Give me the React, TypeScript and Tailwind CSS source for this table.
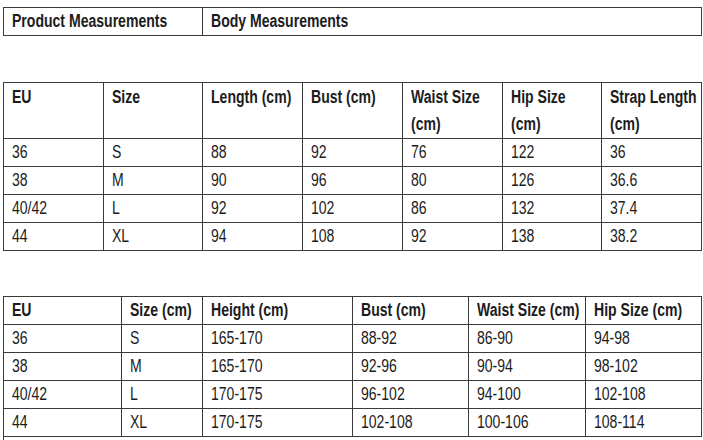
import React from "react";

const font = { fontFamily: '"Liberation Sans", Arial, sans-serif' };

const productHead = [["EU"], ["Size"], ["Length (cm)"], ["Bust (cm)"], ["Waist Size", "(cm)"], ["Hip Size", "(cm)"], ["Strap Length", "(cm)"]];
const productRows = [
  ["36", "S", "88", "92", "76", "122", "36"],
  ["38", "M", "90", "96", "80", "126", "36.6"],
  ["40/42", "L", "92", "102", "86", "132", "37.4"],
  ["44", "XL", "94", "108", "92", "138", "38.2"],
];

const bodyHead = ["EU", "Size (cm)", "Height (cm)", "Bust (cm)", "Waist Size (cm)", "Hip Size (cm)"];
const bodyRows = [
  ["36", "S", "165-170", "88-92", "86-90", "94-98"],
  ["38", "M", "165-170", "92-96", "90-94", "98-102"],
  ["40/42", "L", "170-175", "96-102", "94-100", "102-108"],
  ["44", "XL", "170-175", "102-108", "100-106", "108-114"],
];

const cell = "border border-[#3a3a3a] px-2 py-0 align-top text-left leading-[27px] whitespace-nowrap";

// narrow face, like the condensed type of the original
const N = ({ children }: { children: React.ReactNode }) => (
  <span className="inline-block origin-left scale-x-[0.78]">{children}</span>
);

export default function App() {
  return (
    <div className="w-[703px] h-[440px] overflow-hidden bg-white text-[#1c1c1c] text-[18px] pt-[7px] pl-[3px]" style={font}>
      {/* tabs */}
      <table className="w-[699px] table-fixed border-collapse">
        <colgroup>
          <col className="w-[199px]" />
          <col />
        </colgroup>
        <tbody>
          <tr>
            <td className={`${cell} font-bold`}><N>Product Measurements</N></td>
            <td className={`${cell} font-bold`}><N>Body Measurements</N></td>
          </tr>
        </tbody>
      </table>

      {/* product */}
      <table className="w-[699px] table-fixed border-collapse mt-[46px]">
        <colgroup>
          <col className="w-[100px]" />
          <col className="w-[99px]" />
          <col className="w-[100px]" />
          <col className="w-[100px]" />
          <col className="w-[100px]" />
          <col className="w-[99px]" />
          <col />
        </colgroup>
        <thead>
          <tr>
            {productHead.map((h) => (
              <th key={h[0]} className={`${cell} font-bold pt-[1px] h-[55px]`}>
                {h.map((l) => (
                  <div key={l}><N>{l}</N></div>
                ))}
              </th>
            ))}
          </tr>
        </thead>
        <tbody>
          {productRows.map((r) => (
            <tr key={r[0]}>
              {r.map((v, i) => (
                <td key={i} className={cell}>
                  <N>{v}</N>
                </td>
              ))}
            </tr>
          ))}
        </tbody>
      </table>

      {/* body */}
      <table className="w-[699px] table-fixed border-collapse mt-[45px]">
        <colgroup>
          <col className="w-[118px]" />
          <col className="w-[81px]" />
          <col className="w-[150px]" />
          <col className="w-[116px]" />
          <col className="w-[117px]" />
          <col />
        </colgroup>
        <thead>
          <tr>
            {bodyHead.map((h) => (
              <th key={h} className={`${cell} font-bold`}>
                <N>{h}</N>
              </th>
            ))}
          </tr>
        </thead>
        <tbody>
          {bodyRows.map((r) => (
            <tr key={r[0]}>
              {r.map((v, i) => (
                <td key={i} className={cell}>
                  <N>{v}</N>
                </td>
              ))}
            </tr>
          ))}
        </tbody>
      </table>
      <div className="w-px h-[6px] bg-[#3a3a3a]" />
    </div>
  );
}
